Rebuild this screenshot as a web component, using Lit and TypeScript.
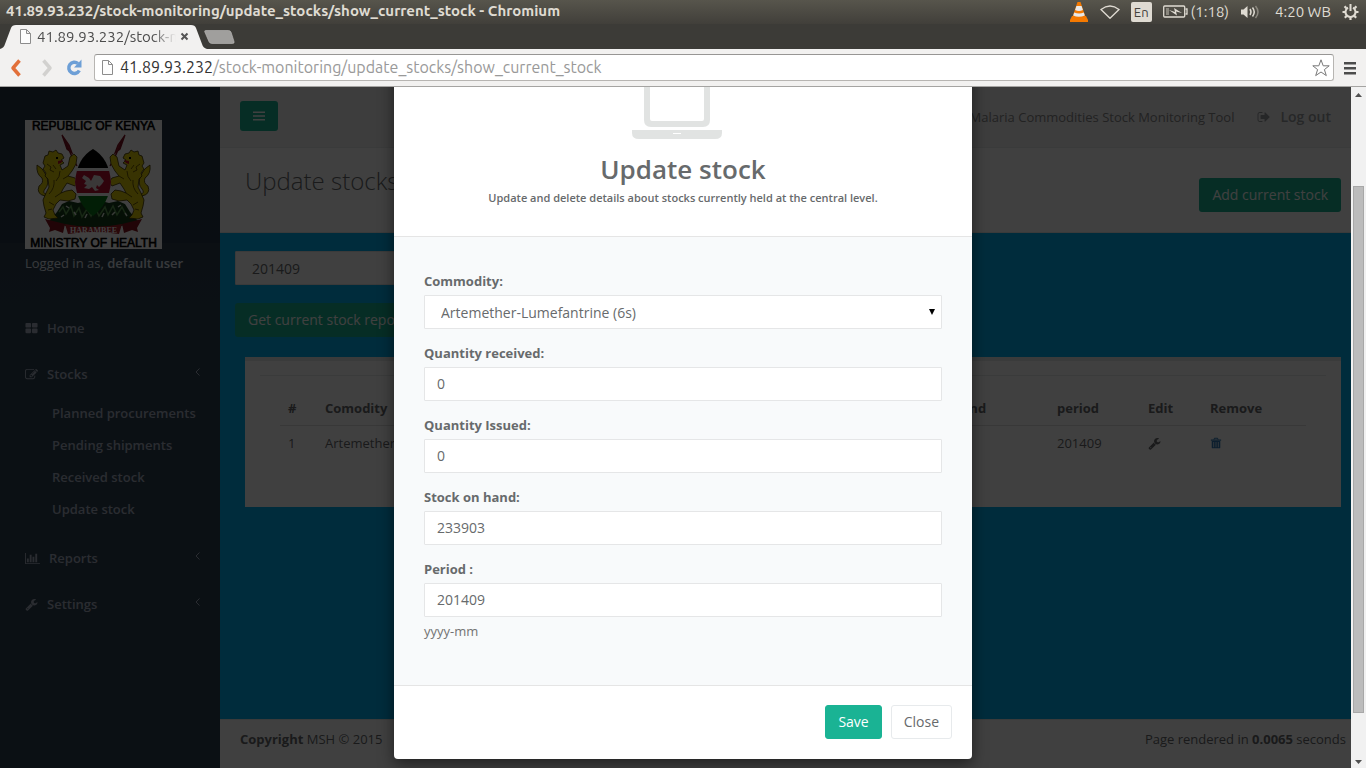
import { LitElement, html, css, svg } from "lit";
import { customElement, property } from "lit/decorators.js";

const ICONS: Record<string, string> = {
  grid: "M832 1024v384q0 52-38 90t-90 38h-512q-52 0-90-38t-38-90v-384q0-52 38-90t90-38h512q52 0 90 38t38 90zm0-768v384q0 52-38 90t-90 38h-512q-52 0-90-38t-38-90v-384q0-52 38-90t90-38h512q52 0 90 38t38 90zm896 768v384q0 52-38 90t-90 38h-512q-52 0-90-38t-38-90v-384q0-52 38-90t90-38h512q52 0 90 38t38 90zm0-768v384q0 52-38 90t-90 38h-512q-52 0-90-38t-38-90v-384q0-52 38-90t90-38h512q52 0 90 38t38 90z",
  edit: "M888 1184l116-116-152-152-116 116v56h96v96h56zm440-720q-16-16-33 1l-350 350q-17 17-1 33t33-1l350-350q17-17 1-33zm80 594v190q0 119-84.5 203.5t-203.5 84.5h-832q-119 0-203.5-84.5t-84.5-203.5v-832q0-119 84.5-203.5t203.5-84.5h832q63 0 117 25 15 7 18 23 3 17-9 29l-49 49q-14 14-32 8-23-6-45-6h-832q-66 0-113 47t-47 113v832q0 66 47 113t113 47h832q66 0 113-47t47-113v-126q0-13 9-22l64-64q15-15 35-7t20 29zm-96-738l288 288-672 672h-288v-288zm444 132l-92 92-288-288 92-92q28-28 68-28t68 28l152 152q28 28 28 68t-28 68z",
  chart: "M0 128h128v1408h1920v128H0zM256 896h256v512H256zM640 384h256v1024H640zM1024 640h256v768h-256zM1408 256h256v1152h-256z",
  wrench: "M448 1472q0-26-19-45t-45-19-45 19-19 45 19 45 45 19 45-19 19-45zm644-420l-682 682q-37 37-90 37-52 0-91-37l-106-108q-38-36-38-90 0-53 38-91l681-681q39 98 114.5 173.5t173.5 114.5zm634-435q0 39-23 106-47 134-164.5 217.5t-258.5 83.5q-185 0-316.5-131.5t-131.5-316.5 131.5-316.5 316.5-131.5q58 0 121.5 16.5t107.5 46.5q16 11 16 28t-16 28l-293 169v224l193 107q5-3 79-48.5t135.5-81 70.5-35.5q15 0 23.5 10t8.5 25z",
  signout: "M704 1440q0 4 1 20t.5 26.5-3 23.5-10 19.5-20.5 6.5h-320q-119 0-203.5-84.5t-84.5-203.5v-704q0-119 84.5-203.5t203.5-84.5h320q13 0 22.5 9.5t9.5 22.5q0 4 1 20t.5 26.5-3 23.5-10 19.5-20.5 6.5h-320q-66 0-113 47t-47 113v704q0 66 47 113t113 47h312l11.5 1 11.5 3 8 5.5 7 9 2 13.5zm928-544q0 26-19 45l-544 544q-19 19-45 19t-45-19-19-45v-288h-448q-26 0-45-19t-19-45v-384q0-26 19-45t45-19h448v-288q0-26 19-45t45-19 45 19l544 544q19 19 19 45z",
  bars: "M128 320h1536v192H128zM128 800h1536v192H128zM128 1280h1536v192H128z",
  trash: "M128 384h400l60-190q20-66 90-66h436q70 0 90 66l60 190h400v160H128zm560-130l-40 130h496l-40-130zM256 600h1280v950q0 130-130 130H386q-130 0-130-130zm256 150v770h100V750zm334 0v770h100V750zm334 0v770h100V750z",
};

@customElement("ui-icon")
export class UiIcon extends LitElement {
  @property() name = "";
  @property({ type: Number }) size = 14;
  static styles = css`
    :host { display: inline-flex; flex: none; }
    svg { display: block; fill: currentColor; fill-rule: evenodd; }
  `;
  render() {
    const wide = this.name === "chart";
    return html`<svg width=${wide ? this.size + 2 : this.size} height=${this.size}
      viewBox=${wide ? "0 0 2048 1792" : "0 0 1792 1792"} aria-hidden="true">${svg`<path d=${ICONS[this.name] ?? ""}></path>`}</svg>`;
  }
}

@customElement("browser-chrome")
export class BrowserChrome extends LitElement {
  static styles = css`
    :host { display: block; flex: none; font-family: Ubuntu, "Noto Sans", sans-serif; }
    svg { display: block; flex: none; }
    button { border: 0; padding: 0; background: none; font: inherit; color: inherit; display: flex; }
    .title { height: 24px; box-sizing: border-box; display: flex; align-items: center; justify-content: space-between;
      padding: 0 7px 2px 6px; background: linear-gradient(#57554c, #413f3a); color: #dfdbd2; font-size: 15px; line-height: 20px; }
    .name { font-weight: 700; white-space: nowrap; }
    .tray { display: flex; align-items: center; gap: 11px; padding-top: 1px; }
    .power { display: flex; align-items: center; gap: 3px; }
    .lang { background: #dfdbd2; color: #45433d; border-radius: 2px; font-size: 13px; line-height: 20px; padding: 0 3px; }
    .clock { margin-left: 4px; }
    .tabs { height: 25px; background: #3c3b37; display: flex; }
    .tab { width: 207px; display: grid; }
    .tab > * { grid-area: 1 / 1; }
    .label { display: flex; align-items: center; padding: 0 14px 0 19px; gap: 5px; font-size: 15px; color: #4c4c4c; }
    .tabname { width: 144px; margin-right: -6px; overflow: hidden; white-space: nowrap;
      mask-image: linear-gradient(90deg, #000 116px, transparent 139px); }
    .newtab { margin: 6px 0 0 -3px; }
    .tools { height: 37px; box-sizing: border-box; background: #f2f1f0; display: flex; align-items: center; padding: 0 9px 0 8px; gap: 14px; }
    .reload { margin-left: -2px; }
    .address { flex: 1; height: 27px; box-sizing: border-box; border: 1px solid #b7b5b2; border-top-color: #979694; border-radius: 3px;
      background: #fff; display: flex; align-items: center; padding: 0 3px 0 6px; gap: 6px; margin: 0 -5px 0 -2px; }
    .url { flex: 1; font-size: 16px; line-height: 20px; padding-bottom: 2px; color: #999; white-space: nowrap; }
    .host { color: #333; }
    .edge { height: 1px; background: #a5a4a2; }
  `;
  page = () => svg`<svg width="13" height="15" viewBox="0 0 13 15" fill="#fdfdfd" stroke="#8c8c8c"><path d="M1.500 .5h6l4 4v10h-10zM7.500 .5v4h4"></path></svg>`;
  render() {
    return html`
      <header class="title">
        <span class="name">41.89.93.232/stock-monitoring/update_stocks/show_current_stock - Chromium</span>
        <div class="tray">
          <svg width="20" height="21" viewBox="0 0 20 21"><path d="M3 15h14l2 4v2H1v-2z" fill="#f57900"></path><path d="M8.500 1h3l5 15q-6.500 4-13 0z" fill="#f57900"></path><path d="M7.400 5h5.200l1.300 4q-4 2-7.800 0zM5.200 11.500q5 2 9.600 0l1 3q-6 2.500-11.600 0z" fill="#e8e8e8"></path></svg>
          <svg width="20" height="14" viewBox="0 0 20 14" fill="none" stroke="#dfdbd2" stroke-width="1.300"><path d="M1 4.500q9-7 18 0L10 13.300z"></path></svg>
          <span class="lang">En</span>
          <span class="power"><svg width="25" height="13" viewBox="0 0 25 13" fill="none" stroke="#dfdbd2" stroke-width="1.300"><rect x=".7" y="1" width="21" height="11" rx="1"></rect><path d="M22.500 4h1.500v5h-1.500"></path><path d="M3 3h3v7H3z" fill="#8a877e" stroke="none"></path><path d="M6 5l6 2-1-4 8 5-6-1.500 1 4z" fill="#dfdbd2" stroke="none"></path></svg>(1:18)</span>
          <svg width="20" height="16" viewBox="0 0 20 16" fill="none" stroke="#dfdbd2" stroke-width="1.500"><path d="M1 5.500h2.500L7.500 2v12l-4-3.500H1z" fill="#dfdbd2" stroke="none"></path><path d="M10 5q2 3 0 6M12.500 3.500q3.500 4.500 0 9"></path><path d="M15.500 2q5 6 0 12" stroke="#8a877e"></path></svg>
          <span class="clock">4:20 WB</span>
          <svg width="17" height="18" viewBox="-8.500 -9 17 18" fill="none" stroke="#dfdbd2"><path d="M-2.500-4.300A5 5 0 1 0 2.500-4.300M0-8v7" stroke-width="2"></path><path d="M5 0h3M-5 0h-3M0 5v3M3.700 3.700l2 2M-3.700 3.700l-2 2M4.200-3.700l1.700-2M-4.200-3.700l-1.700-2" stroke-width="2.200"></path></svg>
        </div>
      </header>
      <nav class="tabs">
        <div class="tab">
          <svg width="207" height="25" viewBox="0 0 207 25"><path d="M0 25Q4 24 5 20L11 4Q12 1 16 1H191Q195 1 196 4L202 20Q203 24 207 25z" fill="#f2f1f0"></path></svg>
          <div class="label">${this.page()}<span class="tabname">41.89.93.232/stock-m</span>
            <button aria-label="Close tab"><svg width="9" height="9" viewBox="0 0 9 9" stroke="#555" stroke-width="2"><path d="M1.500 1.500l6 6M7.500 1.500l-6 6"></path></svg></button>
          </div>
        </div>
        <button class="newtab" aria-label="New tab"><svg width="31" height="14" viewBox="0 0 31 14"><path d="M1.500 .5h23q2 0 2.600 1.800l3 9.400q.5 1.800-1.500 1.800H8q-2.300 0-3-1.800L.8 2Q.3.500 1.500 .5z" fill="#a09f9d" stroke="#bdbcba" stroke-width=".6"></path></svg></button>
      </nav>
      <div class="tools">
        <button aria-label="Back"><svg width="16" height="18" viewBox="0 0 16 18" fill="none" stroke="#e2703a" stroke-width="3.500" stroke-linejoin="round"><path d="M11.500 1.500L5 9l6.500 7.500"></path></svg></button>
        <button aria-label="Forward"><svg width="16" height="18" viewBox="0 0 16 18" fill="none" stroke="#d2d1cf" stroke-width="3.500" stroke-linejoin="round"><path d="M5.500 1.500L12 9l-6.500 7.500"></path></svg></button>
        <button class="reload" aria-label="Reload"><svg width="16" height="17" viewBox="0 0 16 17" fill="none" stroke="#6d9fd6" stroke-width="3.500"><path d="M12 4.500A5.600 5.600 0 1 0 13.300 11.500"></path><path d="M15.500.5v8H8z" fill="#6d9fd6" stroke="none"></path></svg></button>
        <div class="address">${this.page()}<span class="url"><span class="host">41.89.93.232</span>/stock-monitoring/update_stocks/show_current_stock</span>
          <svg width="18" height="18" viewBox="0 0 18 18" fill="#fff" stroke="#777" stroke-linejoin="round"><path d="M9 .8l2.200 6h6l-4.800 3.800 1.900 6L9 13l-5.300 3.600 1.900-6L.8 6.800h6z"></path></svg>
        </div>
        <button aria-label="Menu"><svg width="14" height="14" viewBox="0 0 14 14" fill="#4c4c4c"><path d="M1 1h12v2.500H1zM1 6h12v2.500H1zM1 11h12v2.500H1z"></path></svg></button>
      </div>
      <div class="edge"></div>`;
  }
}

@customElement("coat-of-arms")
export class CoatOfArms extends LitElement {
  static styles = css`
    :host { display: block; width: 137px; height: 129px; }
    svg { display: block; }
    text { font-family: "Liberation Sans", sans-serif; fill: #000; stroke: #000; stroke-width: .6; }
    .motto { font-size: 8px; font-family: "Liberation Serif", serif; fill: #fff; stroke: none; font-weight: 700; }
    .name { font-size: 12px; }
  `;
  lion = () => svg`
    <path d="M37 15l4 8 6 14 5 9M37 15l7 10 3 8-5-4z" fill="#a01828" stroke="#7c1020" stroke-width="1.300"></path>
    <path d="M20 76Q11 74 14 66Q19 63 17 58Q11 54 12 45Q18 48 21 55Q25 64 20 69Q17 73 21 74z" fill="#e0cc0a" stroke="#3c3000" stroke-width=".8"></path>
    <path d="M20 36l3-1 1-4 4 1 3-2 2 3 4 1 2 4-3 2 3 3-4 2 2 5 6-4 2-9 4-3 3 3-1 7-4 7-4 5 7 2 3 4-3 4-8-3-4 6-2 4 5-2 6-1 4 4-1 5-7 2-8-1-4 4-3 6 2 5 3 3-9 1-5-2 2-4-2-7-1-6 3-7 3-6-1-8-3-3 1-3-3-4 2-3-2-3z" fill="#e0cc0a" stroke="#3c3000" stroke-width=".8"></path>
    <path d="M22 44l4 3-1 3 4 2M28 45l3 4M35 51q0 6-4 10M29 60q1 8-5 14M43 56l-5 3M36 73l-6 4M24 82l5 3M23 90l4-1" fill="none" stroke="#6b5800"></path>
    <path d="M31 37h2v2h-2z"></path><path d="M33 41l5-1-2 3-3 1z" fill="#c01020"></path>`;
  render() {
    return html`<svg width="137" height="129" viewBox="0 0 137 129" role="img" aria-label="Republic of Kenya, Ministry of Health">
      <rect width="137" height="129" fill="#fff"></rect>
      <path d="M24 101l8-9 5-8 7-3 9 2 4-1h23l4 1 9-2 7 3 5 8 8 9-20 6H44z" fill="#173c18"></path>
      <path d="M34 92l4-5 3 7 5-8 3 10 5-8 3 9 5-8 4 7 4-9 4 9 6-9 3 8 5-9 4 9 5-8 3 6" fill="none" stroke="#5b9b52" stroke-width="1.500"></path>
      <path d="M41 86l3 2M49 92l2 3M93 87l3-2M87 95l3-3M100 93l2 3M36 97l3-2M60 98l2-4M77 97l2-4" stroke="#dfe8dc" stroke-width="1.500"></path>
      ${this.lion()}<g transform="translate(137 0) scale(-1 1)">${this.lion()}</g>
      <clipPath id="shield"><path d="M68 29Q84 38 86 62Q84 84 68 96Q52 84 50 62Q52 38 68 29z"></path></clipPath>
      <g clip-path="url(#shield)"><path d="M48 28h40v20H48z"></path><path d="M48 48h40v30H48z" fill="#fff"></path><path d="M48 51h40v22H48z" fill="#bb1133"></path><path d="M48 76h40v22H48z" fill="#087a18"></path></g>
      <path d="M59 55l5 3 2 3 3-6 6 1 4 5-2 3-3 3-2-2-1 3 3 2-4 1-3-4-3 2-5-1 3-3-3-1 2-3-4-3z" fill="#e8dfe0"></path>
      <path d="M20 99l20 5-2 9-8-3-6 2 1-4zM117 99l-20 5 2 9 8-3 6 2-1-4z" fill="#85131c"></path>
      <path d="M40 104q28 6 57 0l-3 10q-26-4-51 0z" fill="#a51d26"></path>
      <text class="motto" x="68.500" y="113" text-anchor="middle">HARAMBEE</text>
      <text class="name" x="68.500" y="10" text-anchor="middle">REPUBLIC OF KENYA</text>
      <text class="name" x="68.500" y="127" text-anchor="middle">MINISTRY OF HEALTH</text>
    </svg>`;
  }
}

@customElement("side-nav")
export class SideNav extends LitElement {
  static styles = css`
    :host { display: block; width: 220px; flex: none; background: #2f4050; font-size: 13px; line-height: 18px; }
    .head { background: linear-gradient(#263545, #263747 156px, #2d3e4d 156px, #2f4050 100%); padding: 33px 25px; color: #dfe4ed; }
    .user { margin: 5px 0 0; }
    .user b { font-weight: 600; }
    ul { list-style: none; margin: 0; padding: 0; }
    a { display: flex; align-items: center; gap: 9px; padding: 14px 19px 14px 25px; color: #a7b1c2; font-weight: 600; text-decoration: none; }
    .sub { padding-bottom: 10px; }
    .sub a { padding: 7px 10px 7px 52px; }
    .arrow { margin: 0 0 5px auto; display: block; }
  `;
  arrow = html`<svg class="arrow" width="6" height="8" viewBox="0 0 6 8" fill="none" stroke="currentColor"><path d="M4.500.5L1 4l3.500 3.500"></path></svg>`;
  render() {
    return html`
      <div class="head"><coat-of-arms></coat-of-arms><p class="user">Logged in as, <b>default user</b></p></div>
      <ul>
        <li><a href="#"><ui-icon name="grid" size="13"></ui-icon>Home</a></li>
        <li><a href="#"><ui-icon name="edit" size="13"></ui-icon>Stocks${this.arrow}</a>
          <ul class="sub">${["Planned procurements", "Pending shipments", "Received stock", "Update stock"].map((t) => html`<li><a href="#">${t}</a></li>`)}</ul>
        </li>
        <li><a href="#"><ui-icon name="chart" size="13"></ui-icon>Reports${this.arrow}</a></li>
        <li><a href="#"><ui-icon name="wrench" size="13"></ui-icon>Settings${this.arrow}</a></li>
      </ul>`;
  }
}

@customElement("stock-page")
export class StockPage extends LitElement {
  static styles = css`
    :host { display: flex; flex-direction: column; flex: 1; min-width: 0; font-size: 13px; line-height: 18px; }
    * { box-sizing: border-box; }
    button { font: inherit; font-size: 14px; height: 34px; border: 0; border-radius: 3px; background: #1ab394; color: #fff; padding: 0 13px; white-space: nowrap; }
    .top { background: #f3f3f4; border-bottom: 1px solid #e7eaec; height: 61px; display: flex; align-items: flex-start; justify-content: space-between; padding: 14px 20px 0; }
    .toggle { height: 30px; padding: 0 12px; display: flex; align-items: center; }
    .right { display: flex; align-items: center; gap: 23px; height: 32px; color: #888; }
    .out { display: flex; align-items: center; gap: 9px; color: #999c9e; font-size: 14px; font-weight: 600; text-decoration: none; }
    .heading { background: #fff; border-bottom: 1px solid #e7eaec; height: 85px; display: flex; justify-content: space-between; padding: 20px 10px 0 25px; }
    h2 { margin: 0; font-size: 24px; line-height: 26px; font-weight: 300; }
    .add { margin-top: 10px; }
    .body { flex: 1; background: #00b0f0; padding: 18px 10px 0 15px; }
    select { appearance: none; display: block; width: 50%; height: 34px; border: 1px solid #e5e6e7; border-radius: 1px; background: #fff; font: inherit; font-size: 14px; color: inherit; padding: 2px 16px 0; }
    .get { display: block; margin: 18px 0 20px; }
    .panel { background: #fff; border-top: 4px solid #e7eaec; margin-left: 10px; padding: 14px 15px 47px; }
    hr { border: 0; border-top: 1px solid #e7eaec; margin: 0 0 15px; }
    .wrap { padding: 0 20px; }
    table { width: 100%; table-layout: fixed; border-collapse: collapse; }
    th, td { text-align: left; padding: 8px; vertical-align: middle; }
    thead tr { border-bottom: 1px solid #ddd; }
    .n { width: 37px; } .hand { width: 163px; } .period { width: 91px; } .edit { width: 62px; } .del { width: 104px; }
    .bin { color: #337ab7; }
    td ui-icon { display: flex; }
    .foot { background: #fff; border-top: 1px solid #e7eaec; height: 49px; padding: 10px 5px 0 20px; display: flex; justify-content: space-between; }
  `;
  render() {
    return html`
      <div class="top">
        <button class="toggle" aria-label="Toggle menu"><ui-icon name="bars" size="14"></ui-icon></button>
        <div class="right"><span>Malaria Commodities Stock Monitoring Tool</span><a class="out" href="#"><ui-icon name="signout" size="14"></ui-icon>Log out</a></div>
      </div>
      <div class="heading"><h2>Update stocks</h2><button class="add">Add current stock</button></div>
      <div class="body">
        <select aria-label="Period"><option>201409</option></select>
        <button class="get">Get current stock report</button>
        <div class="panel"><hr /><div class="wrap"><table>
          <thead><tr><th class="n">#</th><th>Comodity</th><th class="hand">Stock on hand</th><th class="period">period</th><th class="edit">Edit</th><th class="del">Remove</th></tr></thead>
          <tbody><tr><td>1</td><td>Artemether-Lumefantrine (6s)</td><td>233903</td><td>201409</td><td><ui-icon name="wrench" size="13"></ui-icon></td><td class="bin"><ui-icon name="trash" size="12"></ui-icon></td></tr></tbody>
        </table></div></div>
      </div>
      <div class="foot"><span><b>Copyright</b> MSH © 2015</span><span>Page rendered in <b>0.0065</b> seconds</span></div>`;
  }
}

@customElement("update-dialog")
export class UpdateDialog extends LitElement {
  static styles = css`
    :host { position: absolute; inset: 0; background: rgba(0, 0, 0, .75); overflow: hidden; display: flex; justify-content: center; align-items: flex-end; padding-bottom: 9px; font-size: 13px; line-height: 18px; }
    * { box-sizing: border-box; }
    .modal { width: 578px; max-width: 100%; background: #fff; border-radius: 4px; box-shadow: 0 5px 15px rgba(0, 0, 0, .5); }
    .head { padding: 30px 15px 29px; text-align: center; border-bottom: 1px solid #e5e5e5; }
    .head svg { display: block; margin: 0 auto 16px; }
    h4 { margin: 0 0 5px; font-size: 26px; line-height: 29px; font-weight: 600; }
    small { display: block; font-size: 11px; font-weight: 600; }
    form { background: #f8fafb; padding: 35px 30px 45px; display: grid; gap: 15px; }
    label { display: block; font-weight: 700; margin-bottom: 5px; }
    .control { width: 100%; height: 34px; border: 1px solid #e5e6e7; border-radius: 1px; background: #fff; font: inherit; font-size: 14px; color: inherit; padding: 0 12px 2px; display: block; }
    .pick { display: grid; align-items: center; }
    .pick > * { grid-area: 1 / 1; }
    select.control { appearance: none; padding: 2px 16px 0; }
    .pick svg { justify-self: end; margin-right: 6px; pointer-events: none; }
    .help { margin: 5px 0 0; color: #737373; }
    .foot { border-top: 1px solid #e5e5e5; padding: 19px 20px 20px; display: flex; justify-content: flex-end; gap: 9px; }
    .btn { height: 34px; border: 1px solid #1ab394; border-radius: 3px; background: #1ab394; color: #fff; font: inherit; font-size: 14px; padding: 0 12px; }
    .plain { background: #fff; border-color: #e7eaec; color: inherit; }
  `;
  field = (id: string, label: string, value: string, help = "") => html`<div>
    <label for=${id}>${label}</label><input class="control" id=${id} .value=${value} />
    ${help ? html`<p class="help">${help}</p>` : ""}</div>`;
  render() {
    return html`<div class="modal" role="dialog" aria-label="Update stock">
      <div class="head">
        <svg width="102" height="64" viewBox="0 0 102 64" fill="#e1e3e2" fill-rule="evenodd"><path d="M19 0h52q7 0 7 7v38q0 7-7 7H19q-7 0-7-7V7q0-7 7-7zm1 6q-2 0-2 2v36q0 2 2 2h50q2 0 2-2V8q0-2-2-2z"></path><path d="M0 55h90v3q0 6-7 6H7q-7 0-7-6zm41 3v1h8v-1z"></path></svg>
        <h4>Update stock</h4>
        <small>Update and delete details about stocks currently held at the central level.</small>
      </div>
      <form>
        <div><label for="commodity">Commodity:</label>
          <div class="pick"><select class="control" id="commodity"><option>Artemether-Lumefantrine (6s)</option></select>
            <svg width="8" height="7" viewBox="0 0 8 7"><path d="M1 0h6L4 6z" fill="#000"></path></svg></div></div>
        ${this.field("received", "Quantity received:", "0")}
        ${this.field("issued", "Quantity Issued:", "0")}
        ${this.field("hand", "Stock on hand:", "233903")}
        ${this.field("period", "Period :", "201409", "yyyy-mm")}
      </form>
      <div class="foot"><button class="btn">Save</button><button class="btn plain">Close</button></div>
    </div>`;
  }
}

@customElement("app-root")
export class AppRoot extends LitElement {
  static styles = css`
    :host { display: flex; flex-direction: column; height: 100vh; overflow: hidden; font-family: "Open Sans", "Noto Sans", sans-serif; color: #676a6c; }
    .page { flex: 1; min-height: 0; position: relative; display: flex; }
    .scroll { width: 15px; flex: none; background: #f1f1f1; z-index: 1; display: flex; flex-direction: column; align-items: center; justify-content: space-between; padding: 6px 0 4px; box-sizing: border-box; }
    .thumb { width: 11px; box-sizing: border-box; border: 1px solid #a8a8a8; background: #bcbcbc; flex: 0 1 527px; margin: 41px 0 0; }
  `;
  render() {
    return html`<browser-chrome></browser-chrome>
      <div class="page">
        <side-nav></side-nav><stock-page></stock-page>
        <update-dialog></update-dialog>
        <div class="scroll"><svg width="7" height="4" viewBox="0 0 7 4"><path d="M0 4h7L3.500 0z" fill="#505050"></path></svg>
          <div class="thumb"></div>
          <svg width="7" height="4" viewBox="0 0 7 4"><path d="M0 0h7L3.500 4z" fill="#505050"></path></svg></div>
      </div>`;
  }
}
